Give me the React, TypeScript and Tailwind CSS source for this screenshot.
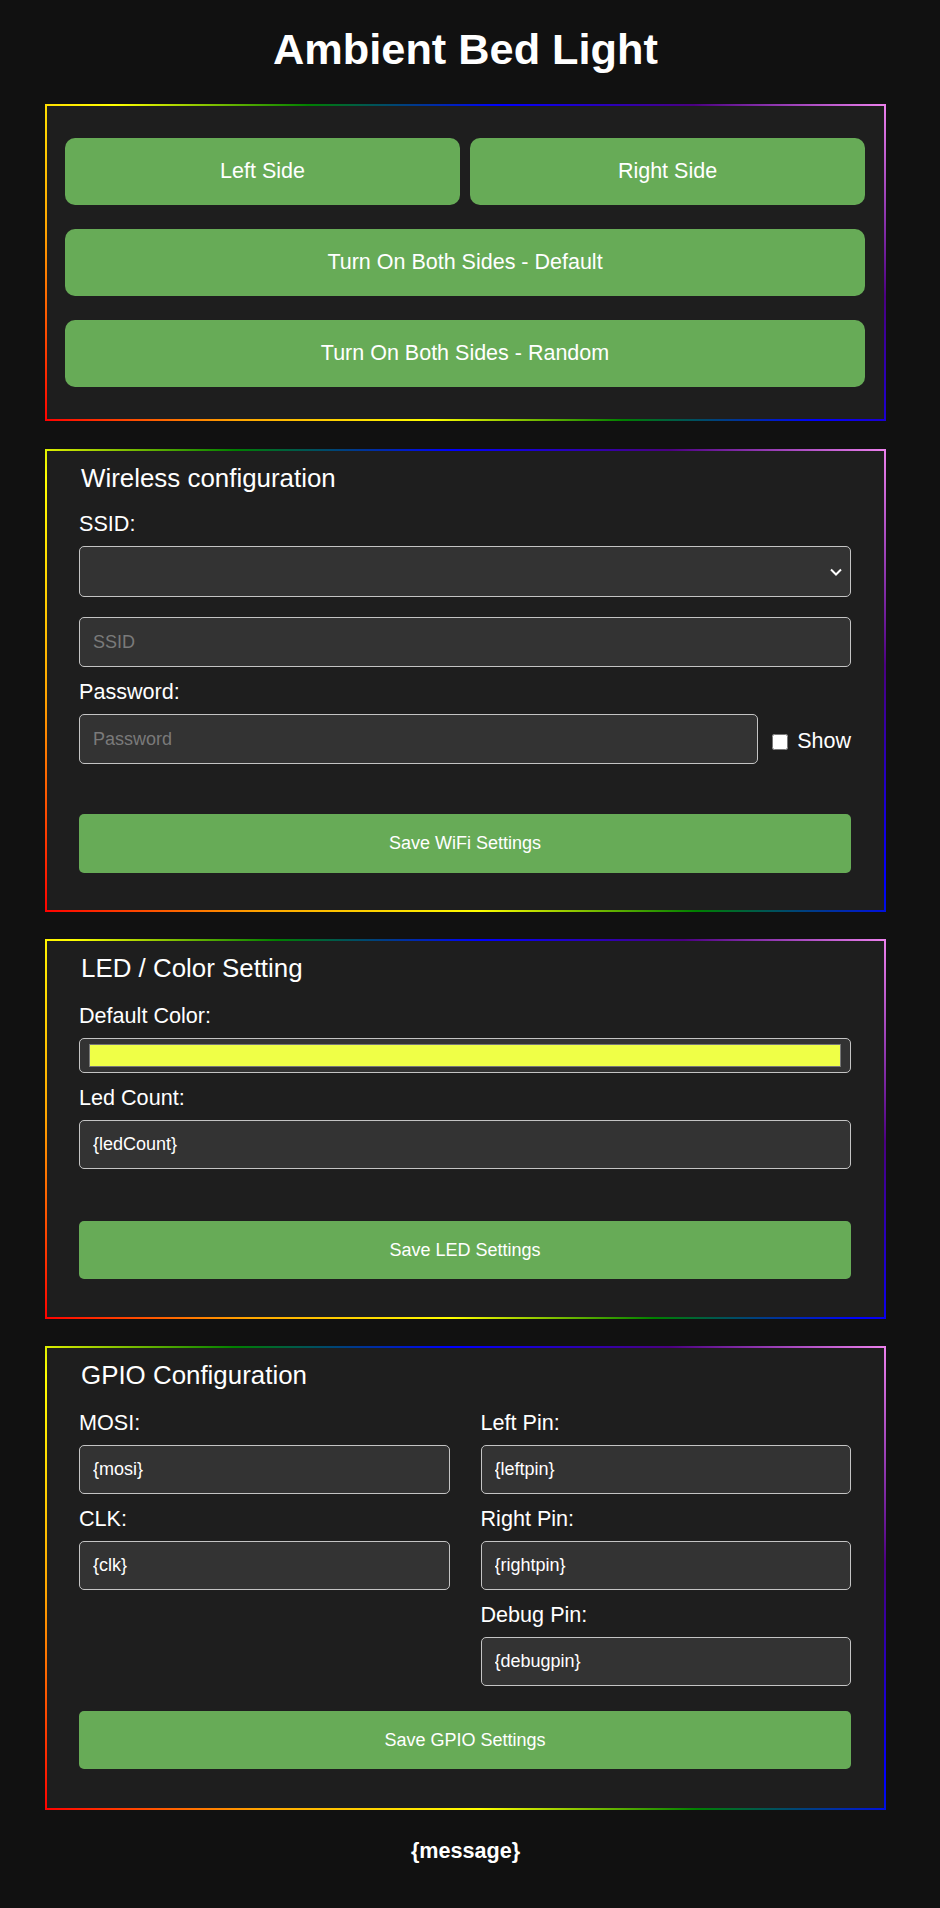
import React from "react";

const Panel = ({ children, className }: { children: React.ReactNode; className: string }) => (
  <div className="p-[2px] bg-[linear-gradient(45deg,red,orange,yellow,green,blue,indigo,violet)]">
    <div className={`bg-[#1e1e1e] ${className}`}>{children}</div>
  </div>
);

const Label = ({ text, className }: { text: string; className: string }) => (
  <label className={`block text-[21.6px] leading-[25px] mb-[10px] ${className}`}>{text}</label>
);

const Field = ({ value, placeholder, h = "h-[49px]" }: { value?: string; placeholder?: string; h?: string }) => (
  <input
    type="text"
    defaultValue={value}
    placeholder={placeholder}
    className={`block w-full ${h} rounded-[5px] border border-[#c4c4c4] bg-[#333333] px-[13px] text-[18px] text-white placeholder:text-[#7a7a7a] outline-none`}
  />
);

const SaveButton = ({ text, className }: { text: string; className: string }) => (
  <button className={`block w-full h-[58px] rounded-[5px] bg-[#67ab57] text-[18px] text-white ${className}`}>
    {text}
  </button>
);

const Heading = ({ text }: { text: string }) => (
  <h2 className="ml-[2px] text-[25.9px] leading-[30px] font-normal">{text}</h2>
);

export default function App() {
  return (
    <div className="min-h-screen bg-[#111111] text-white font-['Liberation_Sans',Arial,sans-serif]">
      <div className="w-[931px] pt-[24px] pb-[40px]">
        <h1 className="text-center text-[43.3px] leading-[50px] font-bold">Ambient Bed Light</h1>

        <div className="mx-auto mt-[30px] w-[841px] flex flex-col gap-[27px]">
          {/* Light controls */}
          <Panel className="pl-[18px] pr-[19px] py-[32px]">
            <div className="grid grid-cols-2 gap-[10px]">
              <button className="h-[67px] rounded-[10px] bg-[#67ab57] text-[21.5px] text-white">Left Side</button>
              <button className="h-[67px] rounded-[10px] bg-[#67ab57] text-[21.5px] text-white">Right Side</button>
            </div>
            <button className="mt-[24px] block w-full h-[67px] rounded-[10px] bg-[#67ab57] text-[21.5px] text-white">
              Turn On Both Sides - Default
            </button>
            <button className="mt-[24px] block w-full h-[67px] rounded-[10px] bg-[#67ab57] text-[21.5px] text-white">
              Turn On Both Sides - Random
            </button>
          </Panel>

          {/* Wireless */}
          <div className="mt-[1px]">
            <Panel className="pl-[32px] pr-[33px] pt-[12px] pb-[37px]">
              <Heading text="Wireless configuration" />
              <Label text="SSID:" className="mt-[18px]" />
              <div className="relative">
                <select className="block w-full h-[51px] appearance-none rounded-[5px] border border-[#c4c4c4] bg-[#333333] px-[13px] text-[18px] text-white outline-none">
                  <option value=""></option>
                </select>
                <svg
                  className="pointer-events-none absolute right-[9px] top-[22px]"
                  width="12"
                  height="8"
                  viewBox="0 0 12 8"
                  fill="none"
                  stroke="white"
                  strokeWidth={2}
                >
                  <path d="M1 1.5l5 5 5-5" />
                </svg>
              </div>
              <div className="mt-[20px]">
                <Field placeholder="SSID" h="h-[50px]" />
              </div>
              <Label text="Password:" className="mt-[12px]" />
              <div className="flex items-center">
                <div className="flex-1">
                  <Field placeholder="Password" h="h-[50px]" />
                </div>
                <input
                  type="checkbox"
                  className="ml-[14px] mt-[6px] h-[16px] w-[16px] rounded-[2px]"
                />
                <span className="ml-[9px] mt-[4px] text-[21.5px] leading-[25px]">Show</span>
              </div>
              <SaveButton text="Save WiFi Settings" className="mt-[50px] h-[59px]" />
            </Panel>
          </div>

          {/* LED */}
          <Panel className="pl-[32px] pr-[33px] pt-[12px] pb-[38px]">
            <Heading text="LED / Color Setting" />
            <Label text="Default Color:" className="mt-[20px]" />
            <div className="h-[35px] rounded-[5px] border border-[#c4c4c4] bg-[#333333] px-[9px] py-[5px]">
              <div className="h-full w-full border border-[#777777] bg-[#efff47]" />
            </div>
            <Label text="Led Count:" className="mt-[12px]" />
            <Field value="{ledCount}" />
            <SaveButton text="Save LED Settings" className="mt-[52px]" />
          </Panel>

          {/* GPIO */}
          <Panel className="pl-[32px] pr-[33px] pt-[12px] pb-[39px]">
            <Heading text="GPIO Configuration" />
            <div className="mt-[20px] grid grid-cols-2 gap-x-[31px] items-start">
              <div>
                <Label text="MOSI:" className="" />
                <Field value="{mosi}" />
                <Label text="CLK:" className="mt-[12px]" />
                <Field value="{clk}" />
              </div>
              <div>
                <Label text="Left Pin:" className="" />
                <Field value="{leftpin}" />
                <Label text="Right Pin:" className="mt-[12px]" />
                <Field value="{rightpin}" />
                <Label text="Debug Pin:" className="mt-[12px]" />
                <Field value="{debugpin}" />
              </div>
            </div>
            <SaveButton text="Save GPIO Settings" className="mt-[25px]" />
          </Panel>
        </div>

        <p className="mt-[28px] text-center text-[21.6px] leading-[25px] font-bold">{"{message}"}</p>
      </div>
    </div>
  );
}
